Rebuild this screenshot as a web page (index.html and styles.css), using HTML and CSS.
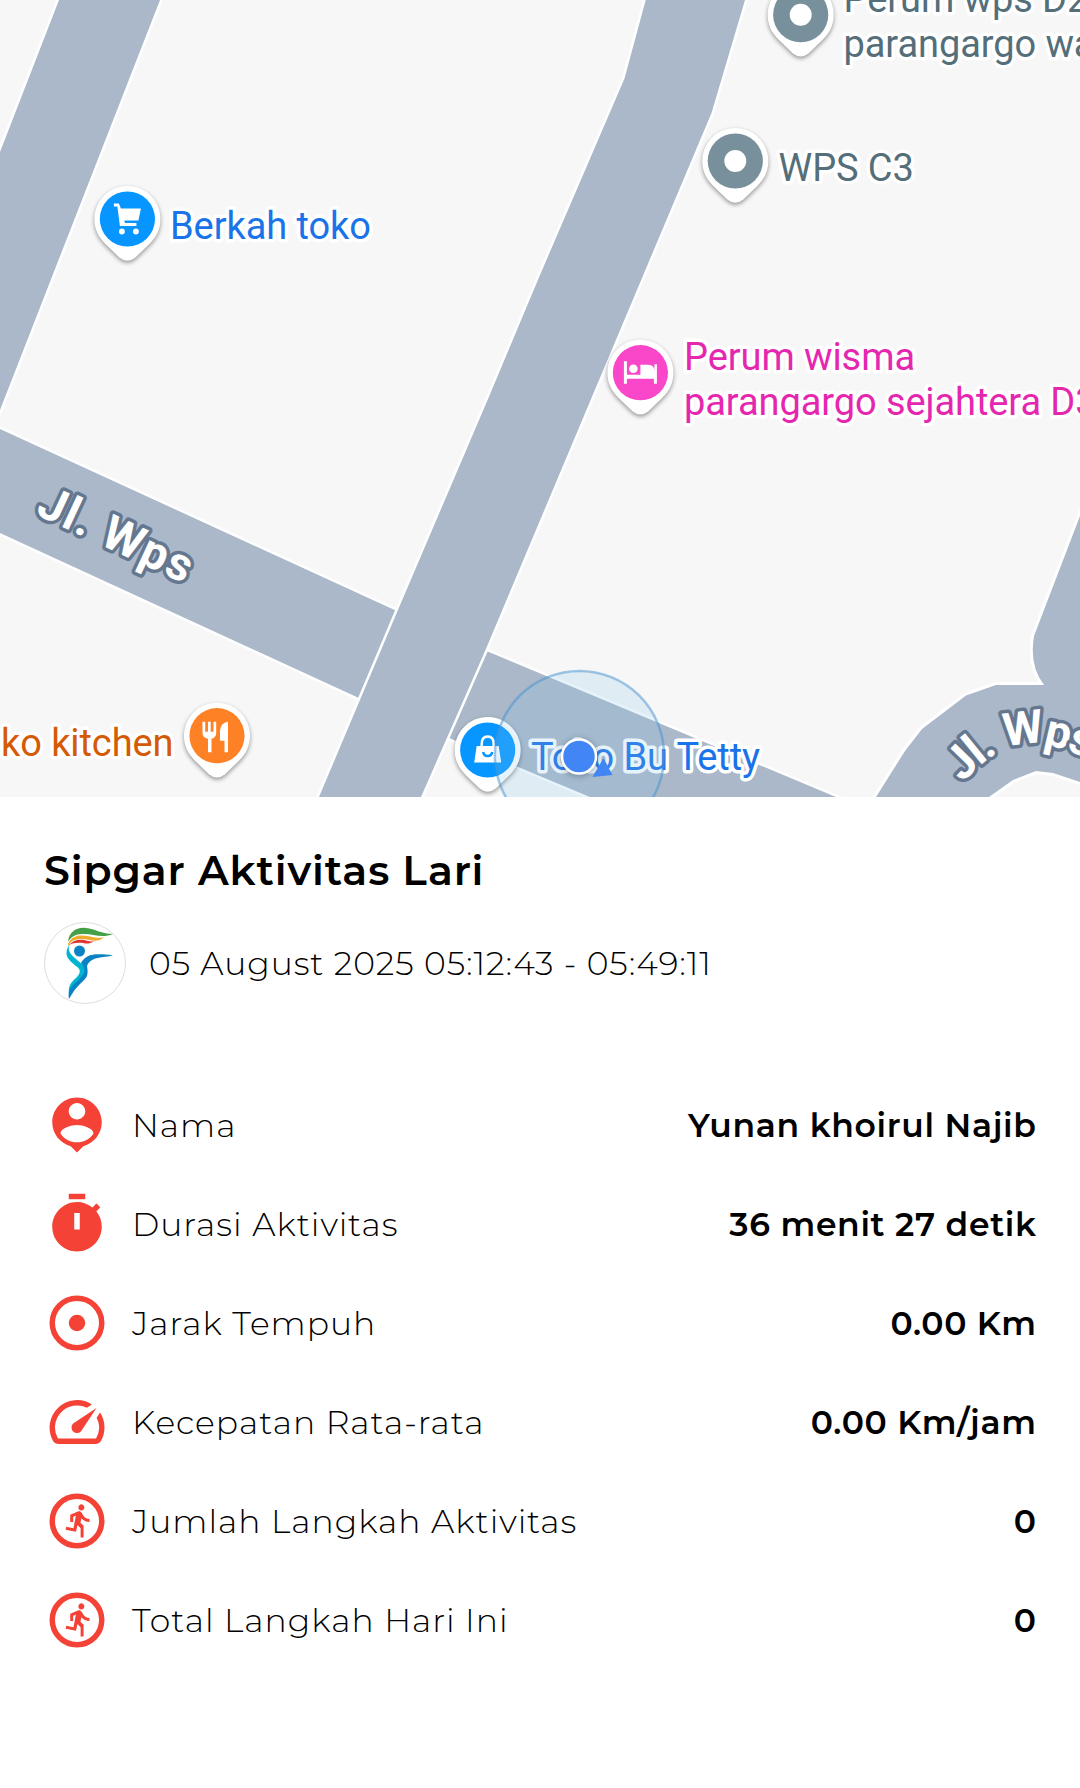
FILE: index.html
```
<!DOCTYPE html>
<html lang="id">
<head>
    <meta charset="UTF-8">
    <meta name="viewport" content="width=device-width, initial-scale=1.0">
    <title>Sipgar Aktivitas Lari</title>
    <link rel="stylesheet" href="styles.css">
</head>
<body>
    <svg class="map" viewBox="0 0 1080 797" width="1080" height="797">
        <defs>
            <g id="pin">
                <path class="pin-shape" d="M0 -33C18.300 -33 33 -18.300 33 0C33 10 29 18 22 25L8 38.500Q0 45 -8 38.500L-22 25C-29 18 -33 10 -33 0C-33 -18.300 -18.300 -33 0 -33Z"/>
                <circle r="27.600"/>
            </g>
            <path id="curve" d="M963 783Q1003 736 1044 745Q1072 749 1112 770"/>
        </defs>

        <!-- side roads -->
        <path class="road" d="M59 0L0 152L-10 178V436L0 410L160 0V-10H63Z"/>
        <path class="road" d="M-10 424L0 429L399 612L361 699L0 533L-10 528Z"/>
        <path class="road" d="M484 650L836 797L856 805H610L590 797L449 738Z"/>
        <g>
            <path class="edge" d="M1090 489L1080 516L1034 636Q1029 666 1044 685L1046 690H1090Z"/>
            <path class="edge" d="M871 805L876 797L905 751L922 729L966 695.500L996 685H1090V786L1080 782L1053 773L1036 771L1013 780L989 797L980 805Z"/>
            <path class="fill" d="M1090 489L1080 516L1034 636Q1029 666 1044 685L1046 690H1090Z"/>
            <path class="fill" d="M871 805L876 797L905 751L922 729L966 695.500L996 685H1090V786L1080 782L1053 773L1036 771L1013 780L989 797L980 805Z"/>
        </g>
        <!-- main road -->
        <path class="road" d="M648 -10L645.700 0L624.500 78.500L540 275L488 399L397.500 611L319 797V810H415L421 797L485.500 650L578 430L711.500 113L745 0L748 -10Z"/>

        <text class="street" transform="translate(34.500 514) rotate(25)" textLength="165">Jl. Wps</text>
        <text class="street curved"><textPath href="#curve">Jl. Wps</textPath></text>

        <g class="blue">
            <use href="#pin" x="127.400" y="219"/>
            <text class="poi" x="170" y="238.500">Berkah toko</text>
            <g class="glyph" transform="translate(127.400 219)">
                <path d="M-13.500 -15.500H-8.500L-6.500 -10.500H13.500L11 1.500H-3L-2.500 4H9V7H-7.500L-10 -12.500H-13.500Z"/>
                <circle cx="-5.500" cy="12.500" r="2.900"/>
                <circle cx="8.500" cy="12.500" r="2.900"/>
            </g>
        </g>

        <g class="grey">
            <use href="#pin" x="800.700" y="14.700"/>
            <circle class="glyph" cx="800.700" cy="14.700" r="11"/>
            <text class="poi" x="843.500" y="12">Perum wps D2</text>
            <text class="poi" x="843.500" y="57">parangargo wajak</text>
            <use href="#pin" x="735.300" y="161"/>
            <circle class="glyph" cx="735.300" cy="161" r="11"/>
            <text class="poi" x="778.500" y="181">WPS C3</text>
        </g>

        <g class="pink">
            <use href="#pin" x="640.400" y="372.700"/>
            <g class="glyph" transform="translate(640.400 372.700)">
                <path d="M-16.500 -11.500H-13.500V2H0V-8H8Q14 -7.500 14 -2V-8.500H16.500V11H13.500V6H-13.500V11H-16.500Z"/>
                <circle cx="-7" cy="-4" r="4.300"/>
            </g>
            <text class="poi" x="684" y="370">Perum wisma</text>
            <text class="poi" x="684" y="415">parangargo sejahtera D3</text>
        </g>

        <g class="orange">
            <use href="#pin" x="217" y="735.700"/>
            <g class="glyph" transform="translate(217 735.700)">
                <path d="M-14.500 -14H-11.800V-4H-9V-14H-6.300V-4H-3.500V-14H-.8V-3Q-.8 2 -5.500 3V16.500H-9V3Q-14.500 2 -14.500 -3Z"/>
                <path d="M11 -14V16.500H7.500V5H3V-5Q3.500 -13 11 -14Z"/>
            </g>
            <text class="poi" x="173.500" y="755.500" text-anchor="end">ko kitchen</text>
        </g>

        <g class="blue">
            <use href="#pin" x="487.700" y="750"/>
            <g class="glyph" transform="translate(487.700 750)">
                <path d="M-11 -4H11L13.500 12.500H-13.500Z"/>
                <path class="handle" d="M-6 -3V-6Q-6 -13.500 0 -13.500Q6 -13.500 6 -6V-3"/>
                <path class="smile" d="M-4.500 2Q-4 6 0 6Q4 6 4.500 2"/>
            </g>
            <text class="poi" x="531" y="770">Toko Bu Tetty</text>
        </g>

        <!-- current location -->
        <circle class="accuracy" cx="579.500" cy="755.500" r="84.600"/>
        <circle class="dot" cx="579" cy="756.500" r="17"/>
        <path class="heading" d="M603.500 758L592.500 777L612.500 775Z"/>
    </svg>

    <div class="detail">
        <h1>Sipgar Aktivitas Lari</h1>
        <div class="date">
            <svg class="logo" viewBox="0 0 82 82" width="82" height="82">
                <circle class="logo-ring" cx="41" cy="41" r="40.500"/>
                <path fill="#43a047" d="M24 20C25 10 32 5 42 6C51 7 58 12 69 12C57 17 48 11 38 12C31 12 27 15 24 20Z"/>
                <path fill="#f0ab2c" d="M24 22C28 13 36 13 43 14C50 15 54 17 60 15C53 22 46 17 37 17C30 17 27 19 24 24Z"/>
                <path fill="#e0352f" d="M25 23C29 18 35 17 40 18C44 19 47 20 50 19C44 24 39 20 33 21C28 21 26 22 25 24Z"/>
                <circle fill="#0a82c4" cx="35.500" cy="29" r="5.500"/>
                <path fill="#00b5d1" d="M25 23C19 34 25 38 32 44C38 48 36 52 32 56C26 61 24 65 25 73C29 66 40 56 42 49C43 44 37 42 32 37C26 32 24 29 25 23Z"/>
                <path fill="#0a82c4" d="M37 41C42 32 49 31 69 33C59 37 48 33 43 44C45 55 42 56 36 62C30 68 28 72 25 77C23 64 32 62 38 54C42 50 41 46 37 41Z"/>
            </svg>
            <span>05 August 2025 05:12:43 - 05:49:11</span>
        </div>

        <div class="row">
            <svg class="icon" viewBox="0 0 24 24"><path d="M12 2c-4.970 0-9 4.030-9 9 0 4.170 2.840 7.670 6.690 8.690L12 22l2.310-2.310C18.160 18.670 21 15.170 21 11c0-4.970-4.030-9-9-9zm0 2c1.660 0 3 1.340 3 3s-1.340 3-3 3-3-1.340-3-3 1.340-3 3-3zm0 14.300c-2.500 0-4.710-1.280-6-3.220.030-1.990 4-3.080 6-3.080 1.990 0 5.970 1.090 6 3.080-1.290 1.940-3.500 3.220-6 3.220z"/></svg>
            <span class="label">Nama</span>
            <span class="value">Yunan khoirul Najib</span>
        </div>
        <div class="row">
            <svg class="icon" viewBox="0 0 24 24"><path d="M15 1H9v2h6V1zm-4 13h2V8h-2v6zm8.030-6.610l1.420-1.420c-.430-.510-.900-.990-1.410-1.410l-1.420 1.420C16.070 4.740 14.120 4 12 4c-4.970 0-9 4.030-9 9s4.020 9 9 9 9-4.030 9-9c0-2.120-.740-4.070-1.970-5.610z"/></svg>
            <span class="label">Durasi Aktivitas</span>
            <span class="value">36 menit 27 detik</span>
        </div>
        <div class="row">
            <svg class="icon" viewBox="0 0 24 24"><circle class="ring" cx="12" cy="12" r="9"/><circle cx="12" cy="12" r="3"/></svg>
            <span class="label">Jarak Tempuh</span>
            <span class="value">0.00 Km</span>
        </div>
        <div class="row">
            <svg class="icon" viewBox="0 0 24 24"><path d="M20.380 8.570l-1.230 1.850a8 8 0 0 1-.220 7.580H5.070A8 8 0 0 1 15.580 6.850l1.850-1.230A10 10 0 0 0 3.350 19a2 2 0 0 0 1.720 1h13.850a2 2 0 0 0 1.740-1 10 10 0 0 0-.270-10.440z"/><path d="M10.590 15.410a2 2 0 0 0 2.830 0l5.660-8.490-8.490 5.660a2 2 0 0 0 0 2.830z"/></svg>
            <span class="label">Kecepatan Rata-rata</span>
            <span class="value">0.00 Km/jam</span>
        </div>
        <div class="row">
            <svg class="icon" viewBox="0 0 24 24"><circle class="ring" cx="12" cy="12" r="9"/><path id="runner" transform="translate(6.300 5.100) scale(.540 .560)" d="M13.490 5.480c1.100 0 2-.9 2-2s-.9-2-2-2-2 .9-2 2 .9 2 2 2zm-3.600 13.900l1-4.400 2.100 2v6h2v-7.500l-2.100-2 .6-3c1.300 1.500 3.300 2.500 5.500 2.500v-2c-1.900 0-3.500-1-4.300-2.400l-1-1.600c-.4-.6-1-1-1.700-1-.3 0-.5.1-.8.1l-5.200 2.200v4.700h2v-3.400l1.800-.7-1.600 8.100-4.900-1-.4 2 7 1.400z"/></svg>
            <span class="label">Jumlah Langkah Aktivitas</span>
            <span class="value">0</span>
        </div>
        <div class="row">
            <svg class="icon" viewBox="0 0 24 24"><circle class="ring" cx="12" cy="12" r="9"/><use href="#runner"/></svg>
            <span class="label">Total Langkah Hari Ini</span>
            <span class="value">0</span>
        </div>
    </div>
</body>
</html>
```
FILE: styles.css
```
body {
    margin: 0;
    background-color: #fff;
    color: #000;
    font-family: Montserrat, Inter, sans-serif;
}

.map {
    display: block;
    background-color: #f7f7f7;
    overflow: hidden;
}

.road {
    fill: #aab8c9;
    stroke: #fff;
    stroke-width: 5;
    paint-order: stroke;
}

.edge {
    fill: none;
    stroke: #fff;
    stroke-width: 6;
}

.fill {
    fill: #aab8c9;
}

.street {
    font-family: Roboto, sans-serif;
    font-size: 47px;
    font-weight: 700;
    fill: #fff;
    stroke: #65778f;
    stroke-width: 7;
    stroke-linejoin: round;
    paint-order: stroke;
}

.curved {
    font-size: 46px;
    letter-spacing: -2px;
}

.poi {
    font-family: Roboto, sans-serif;
    font-size: 38px;
    letter-spacing: -0.08px;
    stroke: #fff;
    stroke-width: 7;
    stroke-linejoin: round;
    paint-order: stroke;
}

.pin-shape {
    fill: #fff;
    filter: drop-shadow(0 2px 2px rgba(0, 0, 0, 0.4));
}

.blue {
    fill: #0796ff;
}

.blue .poi {
    fill: #1a73e8;
}

.grey {
    fill: #78909c;
}

.grey .poi {
    fill: #546e7a;
}

.pink {
    fill: #fa46c8;
}

.pink .poi {
    fill: #e527b0;
}

.orange {
    fill: #ff8126;
}

.orange .poi {
    fill: #d55a04;
}

.glyph {
    fill: #fff;
}

.handle {
    fill: none;
    stroke: #fff;
    stroke-width: 2.5;
}

.smile {
    fill: none;
    stroke: #0796ff;
    stroke-width: 2.5;
}

.accuracy {
    fill: rgba(135, 195, 235, 0.2);
    stroke: rgba(70, 145, 210, 0.5);
    stroke-width: 2.5;
}

.dot {
    fill: #4285f4;
    stroke: #fff;
    stroke-width: 2.5;
    filter: drop-shadow(0 1px 3px rgba(0, 0, 0, 0.3));
}

.heading {
    fill: #4285f4;
}

.detail {
    padding: 47px 44px 0;
}

h1 {
    margin: 0;
    font-size: 41px;
    font-weight: 600;
    line-height: 52px;
    letter-spacing: 0.9px;
}

.date {
    display: flex;
    align-items: center;
    gap: 23px;
    margin: 26px 0 71px;
    font-size: 33px;
    font-weight: 300;
    letter-spacing: 0.92px;
}

.logo-ring {
    fill: #fff;
    stroke: #ddd;
    stroke-width: 1;
}

.row {
    display: flex;
    align-items: center;
    height: 99px;
}

.icon {
    width: 66px;
    height: 66px;
    margin-right: 22px;
    fill: #f44336;
}

.icon path {
    fill-rule: evenodd;
}

.ring {
    fill: none;
    stroke: #f44336;
    stroke-width: 2;
}

.label {
    font-size: 33px;
    font-weight: 300;
    letter-spacing: 1px;
}

.value {
    margin-left: auto;
    margin-right: -0.7px;
    font-size: 33px;
    font-weight: 600;
    letter-spacing: 0.69px;
}
```
